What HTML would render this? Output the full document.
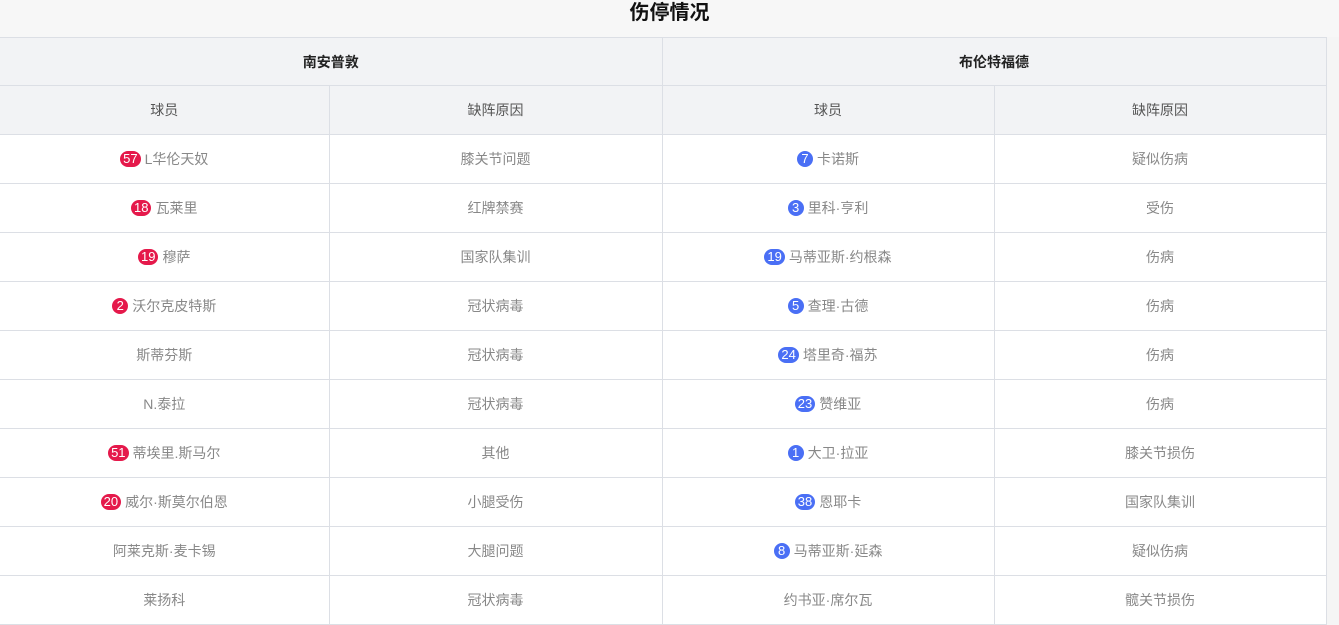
<!DOCTYPE html><html><head><meta charset="utf-8"><style>
body{margin:0;width:1339px;height:625px;overflow:hidden;background:#f5f5f5;font-family:"Liberation Sans","Noto Sans CJK SC",sans-serif}
.top{height:37px;background:#f7f7f7;text-align:center;font-size:20px;font-weight:bold;line-height:26px;color:#111}
table{border-collapse:collapse;width:1326px;table-layout:fixed;background:#fff}
td{text-align:center;font-size:14px;color:#888;height:48px;border:1px solid #dcdfe5;padding:0}
tr.h td{background:#f2f3f5;color:#222;font-weight:bold;font-size:14px;height:47px}
tr.s td{background:#f2f3f5;color:#555;height:48px}
tr td:first-child{border-left:none}
.b{display:inline-block;min-width:16px;height:16px;line-height:16px;border-radius:8px;color:#fff;font-size:13px;padding:0 3px;box-sizing:border-box;margin-right:4px;vertical-align:1px}
.r{background:#e5194b}.u{background:#4a6ff5}
</style></head><body>
<div class="top">伤停情况</div>
<table>
<colgroup><col style="width:329px"><col style="width:333px"><col style="width:332px"><col style="width:332px"></colgroup>
<tr class="h"><td colspan="2">南安普敦</td><td colspan="2">布伦特福德</td></tr>
<tr class="s"><td>球员</td><td>缺阵原因</td><td>球员</td><td>缺阵原因</td></tr>
<tr><td><span class="b r">57</span>L华伦天奴</td><td>膝关节问题</td><td><span class="b u">7</span>卡诺斯</td><td>疑似伤病</td></tr>
<tr><td><span class="b r">18</span>瓦莱里</td><td>红牌禁赛</td><td><span class="b u">3</span>里科·亨利</td><td>受伤</td></tr>
<tr><td><span class="b r">19</span>穆萨</td><td>国家队集训</td><td><span class="b u">19</span>马蒂亚斯·约根森</td><td>伤病</td></tr>
<tr><td><span class="b r">2</span>沃尔克皮特斯</td><td>冠状病毒</td><td><span class="b u">5</span>查理·古德</td><td>伤病</td></tr>
<tr><td>斯蒂芬斯</td><td>冠状病毒</td><td><span class="b u">24</span>塔里奇·福苏</td><td>伤病</td></tr>
<tr><td>N.泰拉</td><td>冠状病毒</td><td><span class="b u">23</span>赞维亚</td><td>伤病</td></tr>
<tr><td><span class="b r">51</span>蒂埃里.斯马尔</td><td>其他</td><td><span class="b u">1</span>大卫·拉亚</td><td>膝关节损伤</td></tr>
<tr><td><span class="b r">20</span>威尔·斯莫尔伯恩</td><td>小腿受伤</td><td><span class="b u">38</span>恩耶卡</td><td>国家队集训</td></tr>
<tr><td>阿莱克斯·麦卡锡</td><td>大腿问题</td><td><span class="b u">8</span>马蒂亚斯·延森</td><td>疑似伤病</td></tr>
<tr><td>莱扬科</td><td>冠状病毒</td><td>约书亚·席尔瓦</td><td>髋关节损伤</td></tr>
</table>
</body></html>
